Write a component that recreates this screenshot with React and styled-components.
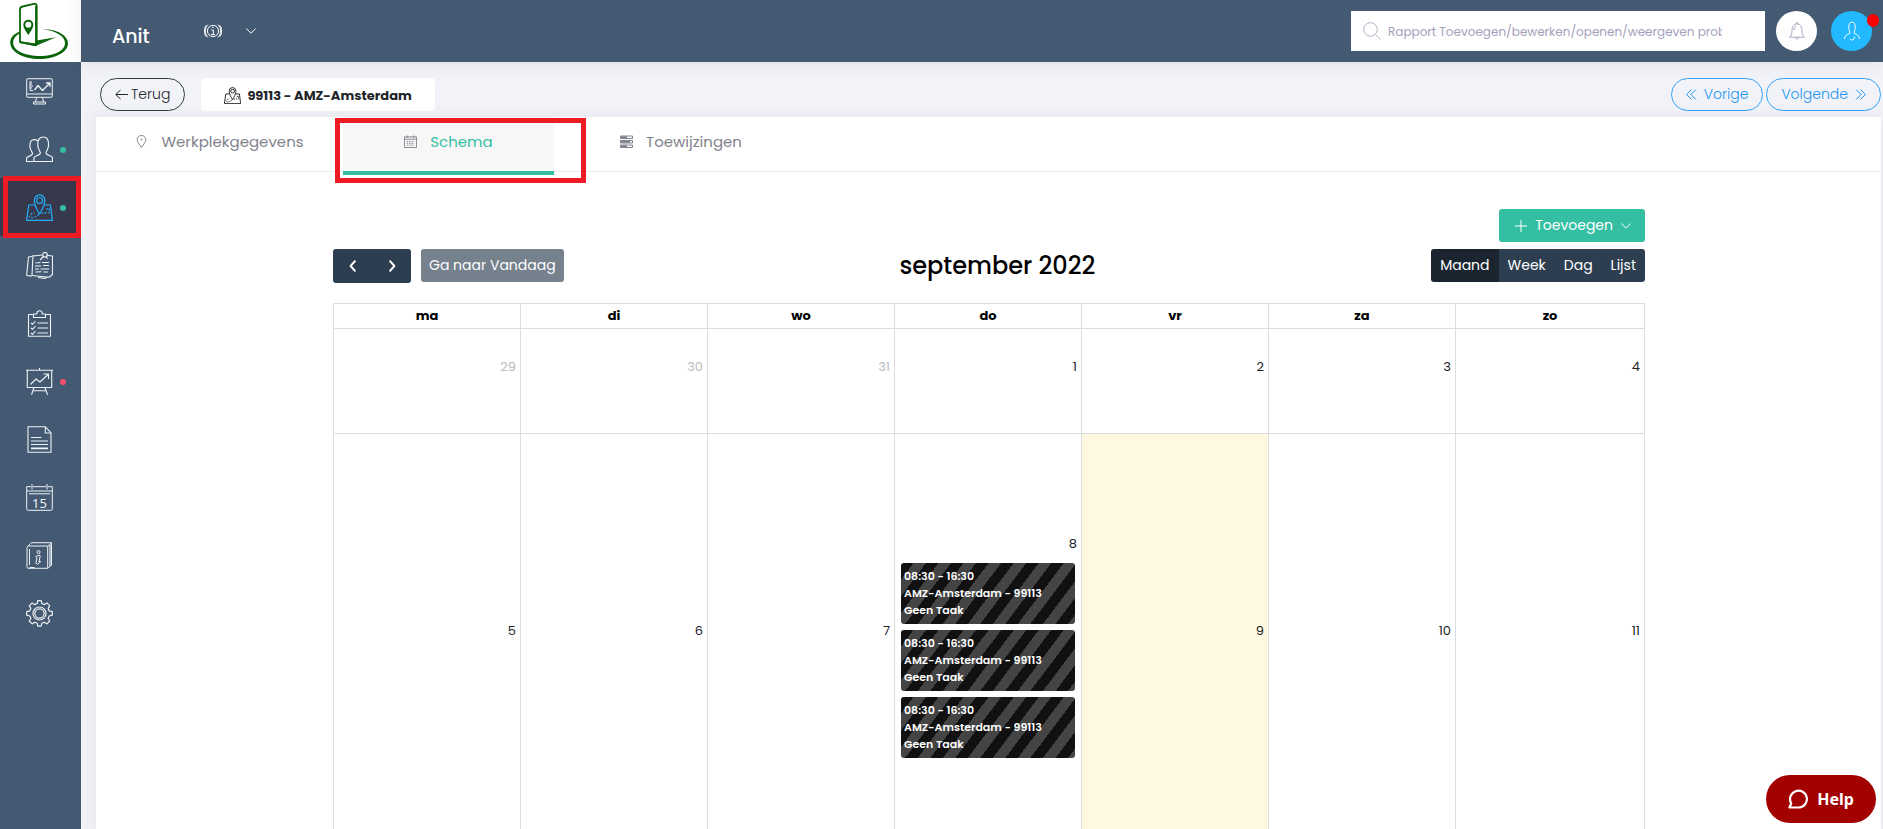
import styled, { createGlobalStyle } from "styled-components"

const COLORS = {
  header: "#445a72",
  active: "#38384d",
  body: "#f2f3f8",
  green: "#34bfa3",
  blue: "#36a3f7",
  navy: "#2c3e50",
  navyDark: "#1a252f",
  line: "#dddddd",
  mark: "#ed1c24",
}

const GlobalStyle = createGlobalStyle`
  * { box-sizing: border-box; }
  body {
    margin: 0;
    background: ${COLORS.body};
    font-family: Poppins, Inter, sans-serif;
    font-size: 13px;
    color: #212529;
  }
  button, input { font-family: inherit; }
  a { text-decoration: none; color: inherit; }
`

/* ---------- icons ---------- */

const Svg = ({ size = 27, box = 27, width = 1, children }) => (
  <svg width={size} height={size} viewBox={`0 0 ${box} ${box}`} fill="none" stroke="currentColor" strokeWidth={width} strokeLinejoin="round" aria-hidden="true">
    {children}
  </svg>
)

const MonitorIcon = () => (
  <Svg>
    <rect x=".7" y=".7" width="25.6" height="18.6" rx="1.2" />
    <path d="M1 16h25M10.500 19.500l-1 4.500M16.500 19.500l1 4.500M7.500 24h12v2h-12z" />
    <path d="M4 3.500v9M4 12.500h3M4 4h2M4 6h2M4 8h3M4 10h2" />
    <path d="M8.500 12l3.500-4.500 4.500 5L23.500 5.500M20 5h4v4" strokeWidth="1.300" />
  </Svg>
)

const UsersIcon = () => (
  <Svg width={1.2}>
    <path d="M8 25.500h18.500v-3.800c0-1.500-6.500-2.500-6.500-4.700 0-1.800 2.200-2.800 2.500-7.500C22.800 3.800 21 1 17.200 1S11.500 3.800 11.800 9.500c.3 4.700 2.600 5.700 2.600 7.500 0 2.200-6.400 3.200-6.400 4.700z" />
    <path d="M7.500 25.500h-7v-3.300c0-1.700 6-2.200 6-4.700 0-1.800-2.300-2.300-2.600-7C3.700 6 5 3.700 8.500 3.700c1.300 0 2.400.4 3.200 1.100" />
  </Svg>
)

const MapIcon = ({ size, width = 1.2 }) => (
  <Svg size={size} width={width}>
    <path d="M8.500 11H2.800L.6 26.400h25.800L24.500 11h-6" />
    <path d="M13.500 20C10.500 15 8.300 11 8.300 6.700a5.200 5.800 0 0 1 10.600 0C18.900 11 16.500 15 13.500 20z" />
    <circle cx="13.600" cy="6.500" r="3" />
    <path d="M13 20.500l-3 2-4.500 1.500-2-1.500 2-3 3-.8M15.500 19.500l4-.8 3.500.3.500-4.500-4.500.8" strokeDasharray="2 1.300" />
  </Svg>
)

const NotesIcon = () => (
  <Svg width={1.1}>
    <path d="M7 3l-1 20.500 17 1.800 3.500-2.800V4l-6-.7M16 3L7 4M6 4.500L2.500 5 .6 23.500l5 .6M12 25.500l7 1 2-1.500" />
    <circle cx="19" cy="2.800" r="2.300" />
    <path d="M17.500 4.500L14 8M20.500 5l1 2" />
    <path d="M9.500 11l5-.5M16 10.500h7M9 14h6M17 13.500h6M9 17h4M14.500 17H23M9.500 20l6-.3M17.500 20H22" />
  </Svg>
)

const ChecklistIcon = () => (
  <Svg width={1.1}>
    <path d="M7.500 4.500h-5v21.800h22V4.500h-5" />
    <path d="M7.500 7.500V4h3.300c0-4.300 5.500-4.300 5.500 0h3.200v3.500z" />
    <path d="M5 13l1.500 1.300L9.500 11M5 18l1.500 1.300 3-3.300M5 23l1.500 1.300 3-3.300M11.500 13H22M11.500 18H22M11.500 23H22" />
  </Svg>
)

const BoardIcon = () => (
  <Svg width={1.1}>
    <path d="M0 2.200h27M1.300 2.500v17M25.700 2.500v17M.8 19.500h25.400M13.500 0v2M8 19.700l-2.500 7M19 19.700l2.500 7M7.300 22.700h12.400" />
    <path d="M4.500 16.500l5.500-5.500 4 3L22 6.500M17.500 6h5v5" />
  </Svg>
)

const DocumentIcon = () => (
  <Svg width={1.1}>
    <path d="M2 .8h17.500l5.500 6v19.500H2z" />
    <path d="M19.300 1v6h5.700M5 11.500h10.500M5 15h17M5 18.500h17M5 22h17M5 22.600h17" />
  </Svg>
)

const CalendarDayIcon = () => (
  <Svg>
    <path d="M7 2.700h13M5 2.700H.7v22q0 1.600 1.600 1.600h22.400q1.600 0 1.600-1.600v-22H22M6 0v5.500M21 0v5.500M.7 7h25.600M3 9.800h21" />
    <text x="13.500" y="23.500" textAnchor="middle" fontSize="13" fontFamily="Noto Sans, sans-serif" fill="currentColor" stroke="none">15</text>
  </Svg>
)

const InfoBookIcon = () => (
  <Svg>
    <path d="M2.200 4h19.500v22.300H2.200q-1.200 0-1.200-1.500V5.500Q1 4 2.200 4z" />
    <path d="M2 4l3.500-3.300h20v22.600L22 26M22 4l3.500-3M3.500 7v16M3.500 25.500h5" />
    <path d="M24 3v21" strokeWidth="2" opacity=".6" />
    <circle cx="12.500" cy="10" r="1.500" />
    <path d="M9.800 14.500l3.600-1.500.8 1-1.200 6 1.800-.5-3.300 2.800-1.700-1 1.200-5.500z" />
  </Svg>
)

const GearIcon = () => (
  <Svg width={1.2}>
    <circle cx="13.500" cy="13.500" r="6.500" />
    <circle cx="13.500" cy="13.500" r="4.600" />
    <path d="M11.200 3.500l.6-2.800h3.400l.6 2.800 2.600 1.100 2.500-1.700 2.900 2.900-1.700 2.500 1 2.500 3.200.8v3.600l-3.100.8-1.100 2.500 1.700 2.500-2.900 2.900-2.500-1.700-2.600 1.100-.6 2.900h-3.400l-.6-2.900-2.600-1.100-2.500 1.700-2.900-2.900 1.700-2.500-1.100-2.500L.7 15.200v-3.600l3.100-.8 1.100-2.500-1.700-2.500 2.900-2.900 2.500 1.700z" />
  </Svg>
)

const Chevron = ({ d, size = 10, width = 1 }) => (
  <Svg size={size} box={10} width={width}><path d={d} /></Svg>
)
const DOWN = "M.3 2.500l4.700 4.700 4.700-4.700"

const Logo = () => (
  <svg width="81" height="62" viewBox="0 0 81 62" aria-label="Logo">
    <g fill="none" stroke="#0b650b" strokeLinejoin="round">
      <path d="M20 42.500V9.500q0-2.500 2.500-3L34 3.800q2.700-.3 2.700 2V41" strokeWidth="1.800" />
      <path d="M20 42l16 3.300V6" strokeWidth="1.800" />
    </g>
    <path d="M19.500 41.500L35 43.200l1.500-2.700 19.500-3.300-20.500 8.700-16-3z" fill="#0b650b" />
    <path d="M20 31.500C13 34 10.500 38 10.200 42c-.3 10 13 17 29.300 17C56 59 68 51.500 68 43.500c0-8.500-11-14-25.500-14.500C56 31 65 36 65 43c0 7.500-10.500 13-25 13-14.500 0-26.500-5-26.800-13-.1-4 2.300-7.500 6.800-9.500z" fill="#0b650b" />
    <path d="M28.300 35c-3-4.500-5-7-5-10.200a5 5 0 0 1 10 0c0 3.200-2 5.700-5 10.200z" fill="#0b650b" />
    <circle cx="28.300" cy="24.800" r="3" fill="#fff" />
  </svg>
)

const InfoIcon = () => (
  <Svg size={18} box={18} width={1}>
    <circle cx="9" cy="9" r="5.600" />
    <path d="M8.300 5.500h1.400M7.300 8H9.300v4.500M7 12.500h4M4 2.600C.4 6 .4 12 4 15.400M14 2.600c3.600 3.400 3.600 9.400 0 12.800M2 3.500c-2.200 3.300-2.200 7.700 0 11M16 3.500c2.200 3.300 2.200 7.700 0 11" />
  </Svg>
)

/* ---------- data ---------- */

const menu = [
  { name: "Dashboard", icon: MonitorIcon },
  { name: "Personeel", icon: UsersIcon, dot: COLORS.green },
  { name: "Werkplekken", icon: MapIcon, dot: COLORS.green, active: true },
  { name: "Notities", icon: NotesIcon },
  { name: "Taken", icon: ChecklistIcon },
  { name: "Analyse", icon: BoardIcon, dot: "#f4516c" },
  { name: "Documenten", icon: DocumentIcon },
  { name: "Agenda", icon: CalendarDayIcon },
  { name: "Informatie", icon: InfoBookIcon },
  { name: "Instellingen", icon: GearIcon },
]

const weekdays = ["ma", "di", "wo", "do", "vr", "za", "zo"]

const shift = { time: "08:30 - 16:30", place: "AMZ-Amsterdam - 99113", task: "Geen Taak" }

const weeks = [
  {
    height: 105,
    days: [{ day: 29, other: true }, { day: 30, other: true }, { day: 31, other: true }, { day: 1 }, { day: 2 }, { day: 3 }, { day: 4 }],
  },
  {
    height: 422,
    days: [{ day: 5 }, { day: 6 }, { day: 7 }, { day: 8, events: [shift, shift, shift] }, { day: 9, today: true }, { day: 10 }, { day: 11 }],
  },
]

/* ---------- page ---------- */

function Sidebar() {
  return (
    <Aside>
      <LogoLink href="#home"><Logo /></LogoLink>
      <nav>
        {menu.map(({ name, icon: Icon, dot, active }) => (
          <MenuLink key={name} href={`#${name.toLowerCase()}`} aria-label={name} $active={active}>
            <Icon />
            {dot && <Dot $color={dot} />}
            {active && <MenuMark />}
          </MenuLink>
        ))}
      </nav>
    </Aside>
  )
}

function TopBar() {
  return (
    <Header>
      <Brand>Anit</Brand>
      <InfoButton aria-label="Informatie">
        <InfoIcon />
        <Chevron d={DOWN} />
      </InfoButton>
      <Search>
        <Svg size={18} box={18}>
          <circle cx="7.500" cy="7.500" r="6.800" />
          <path d="M12.500 12.500l5 5" />
        </Svg>
        <SearchInput type="text" aria-label="Zoeken" placeholder="Rapport Toevoegen/bewerken/openen/weergeven problemen" />
      </Search>
      <RoundButton aria-label="Meldingen">
        <Svg size={20} box={20}>
          <path d="M2.500 16.200c2-1.500 2.500-3.200 2.500-6.700 0-4 2-6.500 5-6.500s5 2.500 5 6.500c0 3.500.5 5.200 2.500 6.700zM8.500 3c0-2 3-2 3 0M8 16.500c.5 2 3.500 2 4 0" />
          <path d="M7 9c0-2 .8-3.300 2.300-3.800" />
        </Svg>
      </RoundButton>
      <RoundButton aria-label="Profiel" $blue>
        <Svg size={20} box={20}>
          <path d="M8 11c-1-1.500-1.200-3-1.200-5.300C6.800 2.500 7.700 1.200 10 1.200s3.200 1.300 3.200 4.500c0 2.300-.2 3.800-1.200 5.300l.3 1.500c3 1.200 5.200 2.500 5.200 5.500M8 11l-.3 1.500C4.700 13.700 2.500 15 2.500 18M8 18l1.500 1.300 2.500-1.500.7-2" />
        </Svg>
        <Badge />
      </RoundButton>
    </Header>
  )
}

function Calendar() {
  return (
    <CalendarArea>
      <AddRow>
        <AddButton>
          <Svg size={12} box={12}><path d="M6 0v12M0 6h12" /></Svg>
          Toevoegen
          <Chevron d={DOWN} />
        </AddButton>
      </AddRow>
      <Toolbar>
        <ButtonGroup>
          <ArrowButton aria-label="Vorige maand"><Chevron d="M7 .5L3 5l4 4.500" size={12} width={1.600} /></ArrowButton>
          <ArrowButton aria-label="Volgende maand"><Chevron d="M3 .5L7 5 3 9.500" size={12} width={1.600} /></ArrowButton>
          <TodayButton>Ga naar Vandaag</TodayButton>
        </ButtonGroup>
        <Month>september 2022</Month>
        <ButtonGroup>
          <ViewButton $active>Maand</ViewButton>
          <ViewButton>Week</ViewButton>
          <ViewButton>Dag</ViewButton>
          <ViewButton>Lijst</ViewButton>
        </ButtonGroup>
      </Toolbar>
      <Grid>
        <thead>
          <tr>{weekdays.map(d => <DayHead key={d}>{d}</DayHead>)}</tr>
        </thead>
        <tbody>
          {weeks.map((week, i) => (
            <WeekRow key={i} $height={week.height}>
              {week.days.map(({ day, other, today, events }) => (
                <DayCell key={day} $today={today}>
                  <DayNumber href={`#dag-${day}`} $other={other}>{day}</DayNumber>
                  <Events>
                    {events?.map((e, n) => (
                      <EventCard key={n} href={`#dienst-${n}`}>
                        <span>{e.time}</span>
                        <span>{e.place}</span>
                        <span>{e.task}</span>
                      </EventCard>
                    ))}
                  </Events>
                </DayCell>
              ))}
            </WeekRow>
          ))}
        </tbody>
      </Grid>
    </CalendarArea>
  )
}

function App() {
  return (
    <Page>
      <GlobalStyle />
      <Sidebar />
      <Content>
        <TopBar />
        <SubHeader>
          <PillButton>
            <Svg size={13} box={13}><path d="M13 6.500H.8M5.500 2L.8 6.500 5.500 11" /></Svg>
            Terug
          </PillButton>
          <PlaceTitle>
            <MapIcon size={17} width={1.500} />
            99113 - AMZ-Amsterdam
          </PlaceTitle>
          <Pager>
            <PillButton $blue>
              <Svg size={11} box={11}><path d="M5.500.5l-5 5 5 5M10 .5l-5 5 5 5" /></Svg>
              Vorige
            </PillButton>
            <PillButton $blue>
              Volgende
              <Svg size={11} box={11}><path d="M5.500.5l5 5-5 5M1 .5l5 5-5 5" /></Svg>
            </PillButton>
          </Pager>
        </SubHeader>
        <Panel>
          <Tabs>
            <Tab href="#werkplekgegevens" $width={247}>
              <Svg size={13} box={14}>
                <path d="M7 13.500C4.500 9.500 2.300 7.500 2.300 5a4.700 4.500 0 0 1 9.400 0c0 2.500-2.200 4.500-4.700 8.500z" />
                <circle cx="7" cy="5" r=".6" />
              </Svg>
              Werkplekgegevens
            </Tab>
            <Tab href="#schema" $width={211} $active>
              <Svg size={13} box={14}>
                <path d="M.5 2h13v11.500H.5zM.5 4.500h13M3.500.5V3M10.500.5V3" />
                <path d="M3 7h8M3 9h8M3 11h8" strokeDasharray="1.500 1" />
              </Svg>
              Schema
              <TabMark />
            </Tab>
            <Tab href="#toewijzingen" $width={254}>
              <Svg size={13} box={13}>
                <path d="M.5 1h12v2.500H.5zM.5 5.500h12V8H.5zM.5 10h12v2.500H.5z" />
                <path d="M1 2.200h6M1 6.700h9M1 11.200h6" strokeWidth="2" />
              </Svg>
              Toewijzingen
            </Tab>
          </Tabs>
          <Calendar />
        </Panel>
      </Content>
      <HelpButton>
        <Svg size={20} box={20} width={2.200}>
          <path d="M1.500 18.500h9a8.400 8.400 0 1 0-7.300-4.200z" />
        </Svg>
        Help
      </HelpButton>
    </Page>
  )
}

const Page = styled.div`
  display: flex;
  height: 100vh;
  overflow: hidden;
`

const Aside = styled.aside`
  flex: 0 0 81px;
  background: ${COLORS.header};
`

const LogoLink = styled.a`
  display: block;
  height: 62px;
  background: #fff;
`

const MenuLink = styled.a`
  position: relative;
  display: flex;
  align-items: center;
  gap: 7px;
  height: 58px;
  padding-left: 26px;
  color: ${props => props.$active ? "#22b0fc" : "#eef1f5"};
  background: ${props => props.$active ? COLORS.active : "transparent"};
`

const Dot = styled.i`
  width: 6px;
  height: 6px;
  margin-top: 2px;
  border-radius: 50%;
  background: ${props => props.$color};
`

const Mark = styled.span`
  position: absolute;
  border: 5px solid ${COLORS.mark};
  pointer-events: none;
  z-index: 2;
`

const MenuMark = styled(Mark)`
  inset: -2px 0 -2px 3px;
`

const TabMark = styled(Mark)`
  inset: 1px -32px -12px -8px;
`

const Content = styled.main`
  flex: 1;
  min-width: 0;
  display: flex;
  flex-direction: column;
`

const Header = styled.header`
  flex: 0 0 62px;
  display: flex;
  align-items: center;
  padding: 0 11px 0 31px;
  background: ${COLORS.header};
  box-shadow: 0 1px 15px 1px rgba(69, 65, 78, 0.1);
  color: #fff;
`

const Brand = styled.span`
  width: 92px;
  padding-top: 10px;
  font-size: 19px;
  font-weight: 500;
`

const InfoButton = styled.button`
  display: flex;
  align-items: center;
  gap: 24px;
  padding: 0;
  border: none;
  background: none;
  color: #fff;
`

const Search = styled.label`
  display: flex;
  align-items: center;
  gap: 7px;
  width: 414px;
  height: 40px;
  margin: 0 11px 0 auto;
  padding: 0 43px 0 12px;
  background: #fff;
  color: #b4b3c6;
`

const SearchInput = styled.input`
  flex: 1;
  min-width: 0;
  padding: 2px 0 0;
  border: none;
  outline: none;
  font-size: 12px;
  &::placeholder {
    color: #a3a1bd;
  }
`

const RoundButton = styled.button`
  position: relative;
  display: flex;
  align-items: center;
  justify-content: center;
  width: 41px;
  height: 40px;
  padding: 0;
  border: none;
  border-radius: 50%;
  background: ${props => props.$blue ? "#22b9ff" : "#fff"};
  color: ${props => props.$blue ? "#fff" : "#a9a8c0"};
  & + & {
    margin-left: 14px;
  }
`

const Badge = styled.i`
  position: absolute;
  top: 3px;
  right: -7px;
  width: 12px;
  height: 13px;
  border-radius: 50%;
  background: #f00;
`

const SubHeader = styled.div`
  display: flex;
  align-items: center;
  padding: 16px 2px 6px 19px;
`

const PillButton = styled.button`
  display: flex;
  align-items: center;
  gap: ${props => props.$blue ? "7px" : "3px"};
  height: 33px;
  padding: 0 14px;
  border: 1px solid ${props => props.$blue ? COLORS.blue : "#343a40"};
  border-radius: 17px;
  background: transparent;
  color: ${props => props.$blue ? "#2196f3" : "#212529"};
  font-size: 14px;
  font-weight: 300;
`

const PlaceTitle = styled.h1`
  display: flex;
  align-items: center;
  gap: 6px;
  height: 33px;
  margin: 0 0 0 16px;
  padding: 2px 23px 0;
  border-radius: 4px;
  background: #fff;
  font-size: 13px;
  font-weight: 700;
`

const Pager = styled.div`
  display: flex;
  gap: 3px;
  margin-left: auto;
`

const Panel = styled.section`
  flex: 1;
  min-height: 0;
  margin: 0 2px 0 15px;
  background: #fff;
  box-shadow: 0 1px 15px 1px rgba(69, 65, 78, 0.08);
`

const Tabs = styled.nav`
  display: flex;
  height: 55px;
  border-bottom: 1px solid #ebedf2;
`

const Tab = styled.a`
  position: relative;
  display: flex;
  align-items: center;
  justify-content: center;
  gap: 13px;
  width: ${props => props.$width}px;
  height: 58px;
  padding-bottom: ${props => props.$active ? "5px" : "9px"};
  border-bottom: ${props => props.$active ? `4px solid ${COLORS.green}` : "none"};
  background: ${props => props.$active ? "#f7f7f7" : "transparent"};
  color: ${props => props.$active ? COLORS.green : "#7f828c"};
  font-size: 15px;
  svg {
    color: #7f828c;
  }
`

const CalendarArea = styled.div`
  padding: 37px 236px 0 237px;
`

const AddRow = styled.div`
  display: flex;
  justify-content: flex-end;
`

const AddButton = styled.button`
  display: flex;
  align-items: center;
  justify-content: center;
  gap: 8px;
  height: 33px;
  padding: 0 14px 0 16px;
  border: none;
  border-radius: 3px;
  background: ${COLORS.green};
  color: #fff;
  font-size: 14px;
  font-weight: 400;
`

const Toolbar = styled.div`
  display: flex;
  justify-content: space-between;
  align-items: center;
  margin: 7px 0 20px;
`

const ButtonGroup = styled.div`
  display: flex;
  height: 34px;
`

const CalButton = styled.button`
  height: 33px;
  padding: 0 8px;
  border: none;
  background: ${COLORS.navy};
  color: #fff;
  font-size: 14px;
  font-weight: 400;
  &:first-child {
    border-radius: 3px 0 0 3px;
  }
  &:last-child {
    border-radius: 0 3px 3px 0;
  }
`

const ArrowButton = styled(CalButton)`
  display: flex;
  align-items: center;
  justify-content: center;
  width: 39px;
  height: 34px;
  & + & {
    border-radius: 0 3px 3px 0;
  }
`

const TodayButton = styled(CalButton)`
  margin-left: 10px;
  &:last-child {
    border-radius: 3px;
  }
  opacity: 0.65;
`

const ViewButton = styled(CalButton)`
  padding: 0 9px;
  background: ${props => props.$active ? COLORS.navyDark : COLORS.navy};
`

const Month = styled.h2`
  margin: 0;
  color: #000;
  font-size: 24px;
  font-weight: 500;
  line-height: 34px;
`

const Grid = styled.table`
  width: 100%;
  table-layout: fixed;
  border-collapse: collapse;
  border: 1px solid ${COLORS.line};
`

const DayHead = styled.th`
  height: 25px;
  padding: 0;
  border: 1px solid ${COLORS.line};
  color: #000;
  font-weight: 700;
  &:not(:last-child) {
    width: 187px;
  }
`

const WeekRow = styled.tr`
  height: ${props => props.$height}px;
`

const DayCell = styled.td`
  padding: 0;
  border: 1px solid ${COLORS.line};
  vertical-align: middle;
  background: ${props => props.$today ? "#fff8e0" : "transparent"};
`

const DayNumber = styled.a`
  display: block;
  padding-right: 4px;
  line-height: 24px;
  text-align: right;
  color: ${props => props.$other ? "#bcbcbc" : "#212529"};
`

const Events = styled.div`
  display: flex;
  flex-direction: column;
  gap: 6px;
  min-height: 28px;
  padding: 7px 6px 0;
`

const EventCard = styled.a`
  display: flex;
  flex-direction: column;
  height: 61px;
  padding: 5px 3px;
  border-radius: 3px;
  background: repeating-linear-gradient(127deg, #111 0, #111 10px, #444 10px, #444 20px);
  color: #fff;
  font-size: 11px;
  font-weight: 600;
  line-height: 17px;
`

const HelpButton = styled.button`
  position: fixed;
  right: 7px;
  bottom: 6px;
  display: flex;
  align-items: center;
  gap: 9px;
  height: 48px;
  padding: 0 22px;
  border: none;
  border-radius: 24px;
  background: #a30000;
  color: #fff;
  font-family: "Noto Sans", sans-serif;
  font-size: 16px;
  font-weight: 700;
`

export default App
